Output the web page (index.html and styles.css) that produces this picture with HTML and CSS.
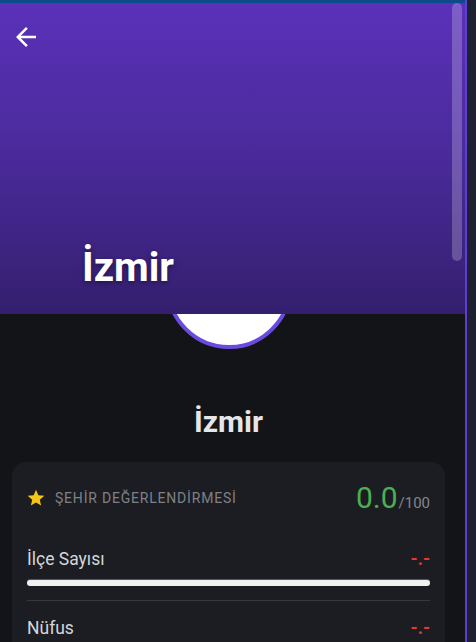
FILE: index.html
```html
<!DOCTYPE html>
<html lang="tr">
<head>
<meta charset="utf-8">
<link rel="stylesheet" href="styles.css">
</head>
<body>
<div class="frame">
  <div class="app">
    <div class="topline"></div>
    <div class="scroller">
      <header class="hero">
        <button class="back" aria-label="Geri">
          <svg viewBox="0 0 24 24" width="30" height="30"><path d="M20 11H7.83l5.59-5.59L12 4l-8 8 8 8 1.41-1.41L7.83 13H20v-2z" fill="#ffffff"/></svg>
        </button>
        <h1 class="hero-title">İzmir</h1>
        <div class="thumb"></div>
      </header>
      <main class="content">
        <div class="avatar"></div>
        <h2 class="city">İzmir</h2>
        <section class="card">
          <div class="card-head">
            <div class="rating-label">
              <svg class="star" viewBox="0 0 24 24" width="20" height="20"><path d="M12 17.27L18.18 21l-1.64-7.03L22 9.24l-7.19-.61L12 2 9.19 8.63 2 9.24l5.46 4.73L5.82 21z" fill="#f5c518"/></svg>
              <span>ŞEHİR DEĞERLENDİRMESİ</span>
            </div>
            <div class="score"><span class="score-num">0.0</span><span class="score-max">/100</span></div>
          </div>
          <div class="stat">
            <div class="stat-row"><span class="stat-name">İlçe Sayısı</span><span class="stat-val">-.-</span></div>
            <div class="bar"></div>
          </div>
          <div class="stat">
            <div class="stat-row"><span class="stat-name">Nüfus</span><span class="stat-val">-.-</span></div>
            <div class="bar"></div>
          </div>
        </section>
      </main>
    </div>
  </div>
  <div class="edge"></div>
  <div class="side"></div>
</div>
</body>
</html>
```

FILE: styles.css
```css
* { box-sizing: border-box; }
html, body { margin: 0; padding: 0; height: 100%; overflow: hidden; }
body { font-family: Roboto, "Noto Sans", sans-serif; background: #1d2130; }

.frame { display: flex; height: 642px; }
.app { width: 465px; display: flex; flex-direction: column; background: #121418; overflow: hidden; }
.topline { height: 3px; background: #0c4a8c; flex: none; }
.edge { width: 2px; background: #5b3fd4; flex: none; }
.side { flex: 1; background: #1d2130; }

.scroller { flex: 1; overflow: hidden; }

.hero {
  position: relative;
  z-index: 2;
  height: 311px;
  background: linear-gradient(180deg, #5a31b9 0%, #4a2a9a 50%, #341f6e 100%);
  display: flex;
  flex-direction: column;
  justify-content: space-between;
  padding: 19px 0 23px 82px;
}
.back {
  background: none; border: 0; padding: 0; margin: 0 0 0 -71px;
  width: 30px; height: 30px; display: block; cursor: pointer;
}
.back svg { display: block; }
.hero-title {
  margin: 0;
  font-size: 40px;
  line-height: 46px;
  font-weight: 700;
  color: #ffffff;
  text-shadow: 0 2px 5px rgba(0,0,0,0.45);
}
.thumb {
  position: absolute;
  right: 3px;
  top: 0;
  width: 10px;
  height: 258px;
  border-radius: 5px;
  background: rgba(255,255,255,0.22);
}

.content {
  width: 457px;
  display: flex;
  flex-direction: column;
  align-items: center;
}
.avatar {
  position: relative;
  z-index: 1;
  width: 126px;
  height: 126px;
  margin-top: -91px;
  border-radius: 50%;
  background: #ffffff;
  border: 4px solid #6a4be0;
}
.city {
  margin: 55px 0 0;
  font-size: 30px;
  line-height: 36px;
  font-weight: 700;
  color: #e6e6ea;
}
.card {
  align-self: stretch;
  margin: 22px 12px 0;
  background: #1b1d22;
  border-radius: 14px;
  padding: 18px 15px 0;
}
.card-head {
  display: flex;
  align-items: center;
  justify-content: space-between;
  height: 36px;
  margin-bottom: 16px;
}
.rating-label {
  display: flex;
  align-items: center;
  gap: 9px;
  color: #808187;
  font-size: 14px;
  font-weight: 400;
  letter-spacing: 0.8px;
}
.star { display: block; flex: none; margin-left: -1px; }
.score { display: flex; align-items: baseline; }
.score-num { font-size: 30px; line-height: 36px; color: #4caf50; }
.score-max { font-size: 15px; color: #85868c; margin-left: 1px; }

.stat {
  padding: 17px 0 14px;
  border-bottom: 1px solid #36383e;
}
.stat-row {
  display: flex;
  justify-content: space-between;
  align-items: baseline;
  line-height: 20px;
}
.stat-name { font-size: 17.5px; color: #d6d6da; }
.stat-val { font-size: 18px; font-weight: 700; color: #e53935; }
.bar {
  margin-top: 11px;
  height: 6px;
  border-radius: 3px;
  background: #f0f0f0;
  box-shadow: 0 -1px 0 #55565b;
}
```
